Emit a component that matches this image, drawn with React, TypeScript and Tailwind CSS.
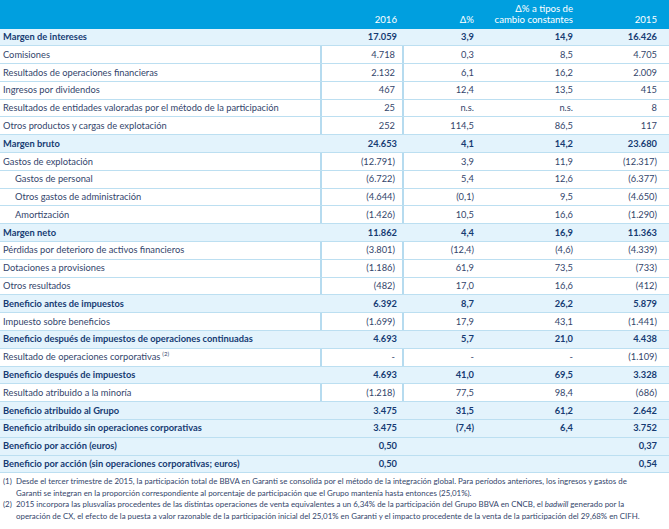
import React from "react";

type Row = { l: string; v: string[]; b?: boolean; i?: boolean; sup?: string };

const rows: Row[] = [
  { l: "Margen de intereses", v: ["17.059", "3,9", "14,9", "16.426"], b: true },
  { l: "Comisiones", v: ["4.718", "0,3", "8,5", "4.705"] },
  { l: "Resultados de operaciones financieras", v: ["2.132", "6,1", "16,2", "2.009"] },
  { l: "Ingresos por dividendos", v: ["467", "12,4", "13,5", "415"] },
  { l: "Resultados de entidades valoradas por el método de la participación", v: ["25", "n.s.", "n.s.", "8"] },
  { l: "Otros productos y cargas de explotación", v: ["252", "114,5", "86,5", "117"] },
  { l: "Margen bruto", v: ["24.653", "4,1", "14,2", "23.680"], b: true },
  { l: "Gastos de explotación", v: ["(12.791)", "3,9", "11,9", "(12.317)"] },
  { l: "Gastos de personal", v: ["(6.722)", "5,4", "12,6", "(6.377)"], i: true },
  { l: "Otros gastos de administración", v: ["(4.644)", "(0,1)", "9,5", "(4.650)"], i: true },
  { l: "Amortización", v: ["(1.426)", "10,5", "16,6", "(1.290)"], i: true },
  { l: "Margen neto", v: ["11.862", "4,4", "16,9", "11.363"], b: true },
  { l: "Pérdidas por deterioro de activos financieros", v: ["(3.801)", "(12,4)", "(4,6)", "(4.339)"] },
  { l: "Dotaciones a provisiones", v: ["(1.186)", "61,9", "73,5", "(733)"] },
  { l: "Otros resultados", v: ["(482)", "17,0", "16,6", "(412)"] },
  { l: "Beneficio antes de impuestos", v: ["6.392", "8,7", "26,2", "5.879"], b: true },
  { l: "Impuesto sobre beneficios", v: ["(1.699)", "17,9", "43,1", "(1.441)"] },
  { l: "Beneficio después de impuestos de operaciones continuadas", v: ["4.693", "5,7", "21,0", "4.438"], b: true },
  { l: "Resultado de operaciones corporativas", v: ["-", "-", "-", "(1.109)"], sup: "(2)" },
  { l: "Beneficio después de impuestos", v: ["4.693", "41,0", "69,5", "3.328"], b: true },
  { l: "Resultado atribuido a la minoría", v: ["(1.218)", "77,5", "98,4", "(686)"] },
  { l: "Beneficio atribuido al Grupo", v: ["3.475", "31,5", "61,2", "2.642"], b: true },
  { l: "Beneficio atribuido sin operaciones corporativas", v: ["3.475", "(7,4)", "6,4", "3.752"], b: true },
  { l: "Beneficio por acción (euros)", v: ["0,50", "", "", "0,37"], b: true },
  { l: "Beneficio por acción (sin operaciones corporativas; euros)", v: ["0,50", "", "", "0,54"], b: true },
];

const font = { fontFamily: "Lato, 'Open Sans', sans-serif" };

export default function App() {
  return (
    <div className="w-[669px] h-[529px] bg-white text-[9.3px] overflow-hidden" style={font}>
      <div className="flex h-[28.5px] bg-[#009fdf] text-white text-[9.6px] leading-[11.5px] items-end pb-[3px]">
        <div className="w-[322px]" />
        <div className="w-[82px] pr-[7px] text-right">2016</div>
        <div className="w-[77px] pr-[7px] text-right">Δ%</div>
        <div className="w-[99px] pr-[7px] text-right">
          <div>Δ% a tipos de</div>
          <div>cambio constantes</div>
        </div>
        <div className="w-[89px] pr-[12px] text-right">2015</div>
      </div>
      {rows.map((r, k) => (
        <div
          key={k}
          className={
            "flex h-[17.8px] items-center border-b border-[#bcdff1] " +
            (r.b ? "bg-[#e3f3fc] font-bold text-[#163b73]" : "bg-white text-[#33456b]")
          }
        >
          <div className={"w-[322px] h-full flex items-center whitespace-nowrap " + (r.i ? "pl-[15px]" : "pl-[3px]") + (r.b ? "" : " border-r-2 border-[#b6dbef]")}>
            {r.l}
            {r.sup && <sup className="text-[6px] ml-[2px] -top-[3px]">{r.sup}</sup>}
          </div>
          <div className={"w-[82px] h-full flex items-center justify-end pr-[7px]" + (r.b ? "" : " border-r-2 border-[#b6dbef]")}>{r.v[0]}</div>
          <div className="w-[77px] h-full flex items-center justify-end pr-[7px]">{r.v[1]}</div>
          <div className="w-[99px] h-full flex items-center justify-end pr-[7px]">{r.v[2]}</div>
          <div className="w-[89px] h-full flex items-center justify-end pr-[12px]">{r.v[3]}</div>
        </div>
      ))}
      <div className="pt-[3px] pl-[3px] text-[7.9px] leading-[11.5px] text-[#33456b] whitespace-nowrap">
        <div className="flex">
          <span className="w-[13px] shrink-0">(1)</span>
          <span>
            Desde el tercer trimestre de 2015, la participación total de BBVA en Garanti se consolida por el método de la integración global. Para períodos anteriores, los ingresos y gastos de
            <br />
            Garanti se integran en la proporción correspondiente al porcentaje de participación que el Grupo mantenía hasta entonces (25,01%).
          </span>
        </div>
        <div className="flex">
          <span className="w-[13px] shrink-0">(2)</span>
          <span>
            2015 incorpora las plusvalías procedentes de las distintas operaciones de venta equivalentes a un 6,34% de la participación del Grupo BBVA en CNCB, el <i>badwill</i> generado por la
            <br />
            operación de CX, el efecto de la puesta a valor razonable de la participación inicial del 25,01% en Garanti y el impacto procedente de la venta de la participación del 29,68% en CIFH.
          </span>
        </div>
      </div>
    </div>
  );
}
